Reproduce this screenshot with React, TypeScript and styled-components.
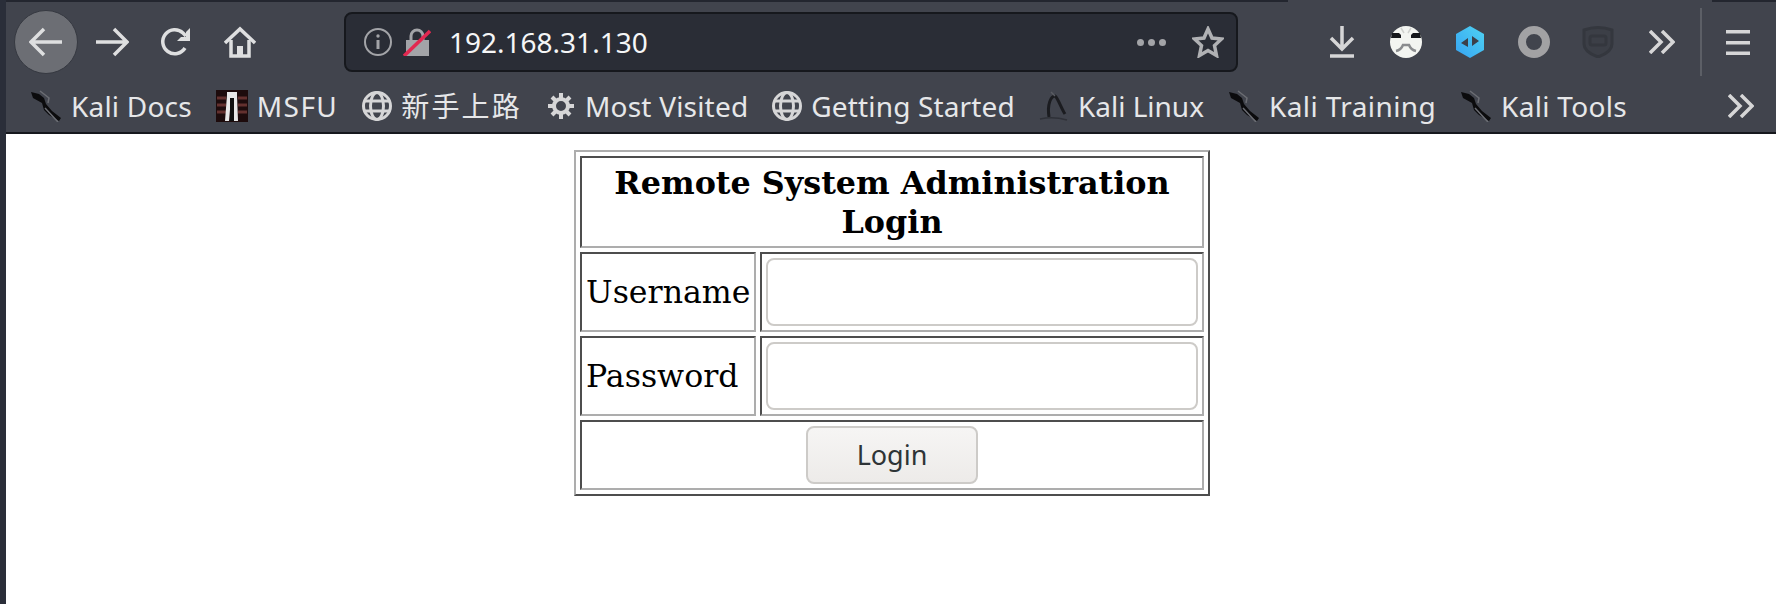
import styled, { createGlobalStyle } from "styled-components";

const GlobalStyle = createGlobalStyle`
  html, body {
    margin: 0;
    padding: 0;
    background: #fff;
  }
`;

const Screen = styled.div`
  display: flex;
  width: 1776px;
  height: 604px;
  overflow: hidden;
`;

const WindowEdge = styled.div`
  width: 6px;
  background: #2a2e39;
`;

const BrowserWindow = styled.div`
  flex: 1;
  display: flex;
  flex-direction: column;
`;

const TopEdge = styled.div`
  display: flex;
  height: 2px;
  background: #23262f;
`;

const TopEdgeGap = styled.div`
  width: 424px;
  margin-left: 1282px;
  background: #41444d;
`;

const NavBar = styled.div`
  display: flex;
  align-items: center;
  height: 80px;
  padding-left: 8px;
  background: #41444d;
`;

const BackButton = styled.button`
  display: flex;
  align-items: center;
  justify-content: center;
  flex: none;
  width: 64px;
  height: 64px;
  margin-right: 2px;
  padding: 0;
  border: 1px solid #363941;
  border-radius: 50%;
  background: #6c6e74;
`;

const IconSlot = styled.div<{ $width?: number }>`
  display: flex;
  align-items: center;
  justify-content: center;
  flex: none;
  width: ${(p) => p.$width ?? 64}px;
`;

const UrlBar = styled.div`
  display: flex;
  align-items: center;
  flex: none;
  width: 894px;
  height: 60px;
  margin-left: 72px;
  margin-right: 72px;
  border: 2px solid #16181d;
  border-radius: 8px;
  box-sizing: border-box;
  background: #2a2d36;
  padding: 0 12px 0 18px;
`;

const UrlText = styled.span`
  flex: 1;
  margin-left: 7px;
  color: #f5f6f7;
  font-family: "Noto Sans", sans-serif;
  font-size: 28px;
  line-height: 1;
`;

const Dots = styled.div`
  display: flex;
  gap: 4px;
  margin-right: 26px;
`;

const Dot = styled.span`
  width: 7px;
  height: 7px;
  border-radius: 50%;
  background: #a3a4a8;
`;

const Divider = styled.div`
  width: 2px;
  height: 68px;
  margin-left: 6px;
  background: #5c5f66;
`;

const BookmarkBar = styled.div`
  display: flex;
  align-items: center;
  gap: 24px;
  height: 48px;
  padding-left: 24px;
  padding-bottom: 2px;
  border-bottom: 2px solid #16181d;
  background: #41444d;
`;

const Bookmark = styled.div<{ $tracking?: number }>`
  display: flex;
  align-items: center;
  gap: 9px;
  color: #e6e7e9;
  font-family: "Noto Sans", "Noto Sans CJK SC", sans-serif;
  font-size: 28px;
  line-height: 1;
  letter-spacing: ${(p) => p.$tracking ?? 0}px;
  white-space: nowrap;
`;

const MoreBookmarks = styled.div`
  display: flex;
  margin-left: auto;
  margin-right: 22px;
`;

const Page = styled.div`
  flex: 1;
  background: #fff;
  padding-top: 16px;
`;

const LoginTable = styled.table`
  margin-left: 568px;
  width: 636px;
  border: 2px solid;
  border-color: #adadad #4d4d4d #4d4d4d #adadad;
  border-spacing: 4px;
  border-collapse: separate;
  font-family: "DejaVu Serif", serif;
  font-size: 31.6px;
  color: #000;
`;

const HeaderCell = styled.th`
  padding: 5px 2px;
  border: 2px solid;
  border-color: #4d4d4d #adadad #adadad #4d4d4d;
  font-size: 31.8px;
  font-weight: 700;
  line-height: 39px;
`;

const LabelCell = styled.td`
  width: 164px;
  padding: 3px 4px;
  border: 2px solid;
  border-color: #4d4d4d #adadad #adadad #4d4d4d;
  white-space: nowrap;
`;

const FieldCell = styled.td`
  padding: 4px;
  border: 2px solid;
  border-color: #4d4d4d #adadad #adadad #4d4d4d;
`;

const ButtonCell = styled.td`
  padding: 4px;
  border: 2px solid;
  border-color: #4d4d4d #adadad #adadad #4d4d4d;
  text-align: center;
`;

const TextField = styled.input`
  display: block;
  width: 100%;
  height: 68px;
  box-sizing: border-box;
  border: 2px solid #cdcbc8;
  border-radius: 8px;
  background: #fff;
`;

const LoginButton = styled.button`
  width: 172px;
  height: 58px;
  padding-bottom: 3px;
  border: 2px solid #cdcbc8;
  border-radius: 8px;
  background: linear-gradient(#f6f5f4, #edebe9);
  color: #2e3436;
  font-family: "Noto Sans", sans-serif;
  font-size: 27px;
`;

function Arrow({ flip = false }: { flip?: boolean }) {
  return (
    <svg width="34" height="30" viewBox="0 0 34 30" fill="none" stroke="#dedfe0" strokeWidth="3.5">
      <path d={flip ? "M1 15H31M19 2L32 15L19 28" : "M33 15H3M15 2L2 15L15 28"} />
    </svg>
  );
}

function Reload() {
  return (
    <svg width="32" height="32" viewBox="0 0 32 32" fill="none">
      <path d="M25 22A12 12 0 1 1 23 7L26 10" stroke="#dedfe0" strokeWidth="3.5" />
      <path d="M30 2V15H17L21 11H26V6Z" fill="#dedfe0" />
    </svg>
  );
}

function Home() {
  return (
    <svg width="32" height="32" viewBox="0 0 32 32" fill="none" stroke="#dedfe0" strokeWidth="3.5">
      <path d="M1 17L16 3L31 17" />
      <path d="M7 14V30H25V14" />
      <rect x="13" y="20" width="6" height="10" fill="#dedfe0" stroke="none" />
    </svg>
  );
}

function InfoIcon() {
  return (
    <svg width="28" height="28" viewBox="0 0 28 28" fill="none" stroke="#a3a4a8" strokeWidth="2">
      <circle cx="14" cy="14" r="13" />
      <path d="M14 12V21" strokeWidth="3" />
      <circle cx="14" cy="8" r="1.7" fill="#a3a4a8" stroke="none" />
    </svg>
  );
}

function BrokenLock() {
  return (
    <svg width="28" height="28" viewBox="0 0 28 28" fill="none">
      <path d="M8 12V8a6 6 0 0 1 12 0v4" stroke="#a3a4a8" strokeWidth="3" />
      <rect x="3" y="12" width="23" height="16" fill="#a3a4a8" />
      <path d="M1 28L27 3" stroke="#e22850" strokeWidth="3.5" />
    </svg>
  );
}

function Star() {
  return (
    <svg width="32" height="32" viewBox="0 0 32 32" fill="none" stroke="#b0b1b4" strokeWidth="3.5">
      <path d="M16 3L20 12L29.5 13L22.5 19.5L24.5 29.5L16 24.5L7.5 29.5L9.5 19.5L2.5 13L12 12Z" />
    </svg>
  );
}

function Download() {
  return (
    <svg width="26" height="32" viewBox="0 0 26 32" fill="none" stroke="#d6d6d7" strokeWidth="3.5">
      <path d="M13 0V22M2 12L13 23L24 12" />
      <path d="M1 30H25" />
    </svg>
  );
}

function Trooper() {
  return (
    <svg width="32" height="32" viewBox="0 0 32 32">
      <circle cx="16" cy="16" r="16" fill="#f3f5f1" />
      <path d="M2 7H9L11 9V12H1ZM30 7H23L21 9V12H31Z" fill="#16181c" />
      <path d="M6 25Q11 24 13 19H19Q21 24 26 25" fill="none" stroke="#8a8c8e" strokeWidth="2.5" />
      <path d="M11 2L14 7M21 2L18 7" stroke="#d0d2cf" strokeWidth="1.5" />
    </svg>
  );
}

function CodeHex() {
  return (
    <svg width="30" height="32" viewBox="0 0 30 32">
      <defs>
        <linearGradient id="hex" x1="0" y1="1" x2="1" y2="0">
          <stop offset="0" stopColor="#36a3f2" />
          <stop offset="1" stopColor="#4fd3f2" />
        </linearGradient>
      </defs>
      <path d="M15 0L29 8V24L15 32L1 24V8Z" fill="url(#hex)" />
      <path d="M6 17L13 12V21ZM24 15L17 10V20Z" fill="#3c4049" />
    </svg>
  );
}

function Ring() {
  return (
    <svg width="32" height="32" viewBox="0 0 32 32" fill="none">
      <circle cx="16" cy="16" r="12" stroke="#a2a2a4" strokeWidth="8" />
    </svg>
  );
}

function Shield() {
  return (
    <svg width="32" height="32" viewBox="0 0 32 32" fill="none" stroke="#34373e">
      <path d="M2 4Q16 -1 30 4V18Q30 26 16 31Q2 26 2 18Z" fill="#3c3f47" strokeWidth="3" />
      <rect x="8" y="10" width="16" height="9" rx="2" strokeWidth="3" />
    </svg>
  );
}

function Chevrons() {
  return (
    <svg width="26" height="24" viewBox="0 0 26 24" fill="none" stroke="#d6d6d7" strokeWidth="3.5">
      <path d="M1 1L12 12L1 23M13 1L24 12L13 23" />
    </svg>
  );
}

function Hamburger() {
  return (
    <svg width="24" height="25" viewBox="0 0 24 25" fill="#d6d6d7">
      <rect y="0" width="24" height="3.5" />
      <rect y="11" width="24" height="3.5" />
      <rect y="21.5" width="24" height="3.5" />
    </svg>
  );
}

function Dragon() {
  return (
    <svg width="32" height="32" viewBox="0 0 32 32" fill="none">
      <path d="M1 2L9 4L14 8L16 14L22 21L31 28L29 31L19 25L14 20L12 13L3 8Z" fill="#0b0b0d" />
      <path d="M10 1L19 8L18 13M15 18L28 32" stroke="#6b6d73" strokeWidth="1.5" />
    </svg>
  );
}

function MsfuIcon() {
  return (
    <svg width="32" height="32" viewBox="0 0 32 32">
      <rect width="32" height="32" fill="#1d0b0c" />
      <path d="M1 8H10M22 8H31M1 15H10M22 15H31M1 22H10M22 22H31" stroke="#63302e" strokeWidth="3" />
      <path d="M11 5V2H21V5L22 31H18L17 8H15L13 31H9Z" fill="#e8e8e8" />
      <path d="M14 8H18V31H14Z" fill="#101010" />
    </svg>
  );
}

function Globe() {
  return (
    <svg width="30" height="32" viewBox="0 0 30 32" fill="none" stroke="#d6d6d7" strokeWidth="3">
      <circle cx="15" cy="16" r="13.5" />
      <ellipse cx="15" cy="16" rx="6.5" ry="13.5" />
      <path d="M3 11H27M3 21H27" />
    </svg>
  );
}

function Gear() {
  return (
    <svg width="30" height="30" viewBox="0 0 30 30" fill="none" stroke="#d6d6d7">
      <circle cx="15" cy="15" r="7" strokeWidth="4" />
      <path d="M15 2V7M15 23V28M2 15H7M23 15H28M6 6L10 10M20 20L24 24M24 6L20 10M10 20L6 24" strokeWidth="4" />
    </svg>
  );
}

function KaliLinuxIcon() {
  return (
    <svg width="30" height="32" viewBox="0 0 30 32" fill="none" stroke="#1b1c20" strokeWidth="3">
      <path d="M10 27C8 14 12 6 16 6C19 8 22 18 26 24" />
      <path d="M1 29Q14 26 28 30" stroke="#2f3138" strokeWidth="1.5" />
      <path d="M12 2L16 6" stroke="#5a5c63" strokeWidth="1.5" />
    </svg>
  );
}

const bookmarks = [
  { label: "Kali Docs", icon: <Dragon />, tracking: 0.2 },
  { label: "MSFU", icon: <MsfuIcon />, tracking: 1.4 },
  { label: "新手上路", icon: <Globe />, tracking: 2.2 },
  { label: "Most Visited", icon: <Gear />, tracking: 0.2 },
  { label: "Getting Started", icon: <Globe />, tracking: 0.15 },
  { label: "Kali Linux", icon: <KaliLinuxIcon /> },
  { label: "Kali Training", icon: <Dragon />, tracking: 0.4 },
  { label: "Kali Tools", icon: <Dragon />, tracking: 0.3 },
];

export default function App() {
  return (
    <>
      <GlobalStyle />
      <Screen>
        <WindowEdge />
        <BrowserWindow>
          <TopEdge>
            <TopEdgeGap />
          </TopEdge>
          <NavBar>
            <BackButton>
              <Arrow />
            </BackButton>
            <IconSlot><Arrow flip /></IconSlot>
            <IconSlot><Reload /></IconSlot>
            <IconSlot><Home /></IconSlot>
            <UrlBar>
              <InfoIcon />
              <IconSlot $width={50}><BrokenLock /></IconSlot>
              <UrlText>192.168.31.130</UrlText>
              <Dots>
                <Dot />
                <Dot />
                <Dot />
              </Dots>
              <Star />
            </UrlBar>
            <IconSlot><Download /></IconSlot>
            <IconSlot><Trooper /></IconSlot>
            <IconSlot><CodeHex /></IconSlot>
            <IconSlot><Ring /></IconSlot>
            <IconSlot><Shield /></IconSlot>
            <IconSlot><Chevrons /></IconSlot>
            <Divider />
            <IconSlot $width={72}><Hamburger /></IconSlot>
          </NavBar>
          <BookmarkBar>
            {bookmarks.map((b) => (
              <Bookmark key={b.label} $tracking={b.tracking}>
                {b.icon}
                {b.label}
              </Bookmark>
            ))}
            <MoreBookmarks><Chevrons /></MoreBookmarks>
          </BookmarkBar>
          <Page>
            <LoginTable>
              <tbody>
                <tr>
                  <HeaderCell colSpan={2}>Remote System Administration Login</HeaderCell>
                </tr>
                <tr>
                  <LabelCell>Username</LabelCell>
                  <FieldCell><TextField type="text" /></FieldCell>
                </tr>
                <tr>
                  <LabelCell>Password</LabelCell>
                  <FieldCell><TextField type="password" /></FieldCell>
                </tr>
                <tr>
                  <ButtonCell colSpan={2}><LoginButton>Login</LoginButton></ButtonCell>
                </tr>
              </tbody>
            </LoginTable>
          </Page>
        </BrowserWindow>
      </Screen>
    </>
  );
}
